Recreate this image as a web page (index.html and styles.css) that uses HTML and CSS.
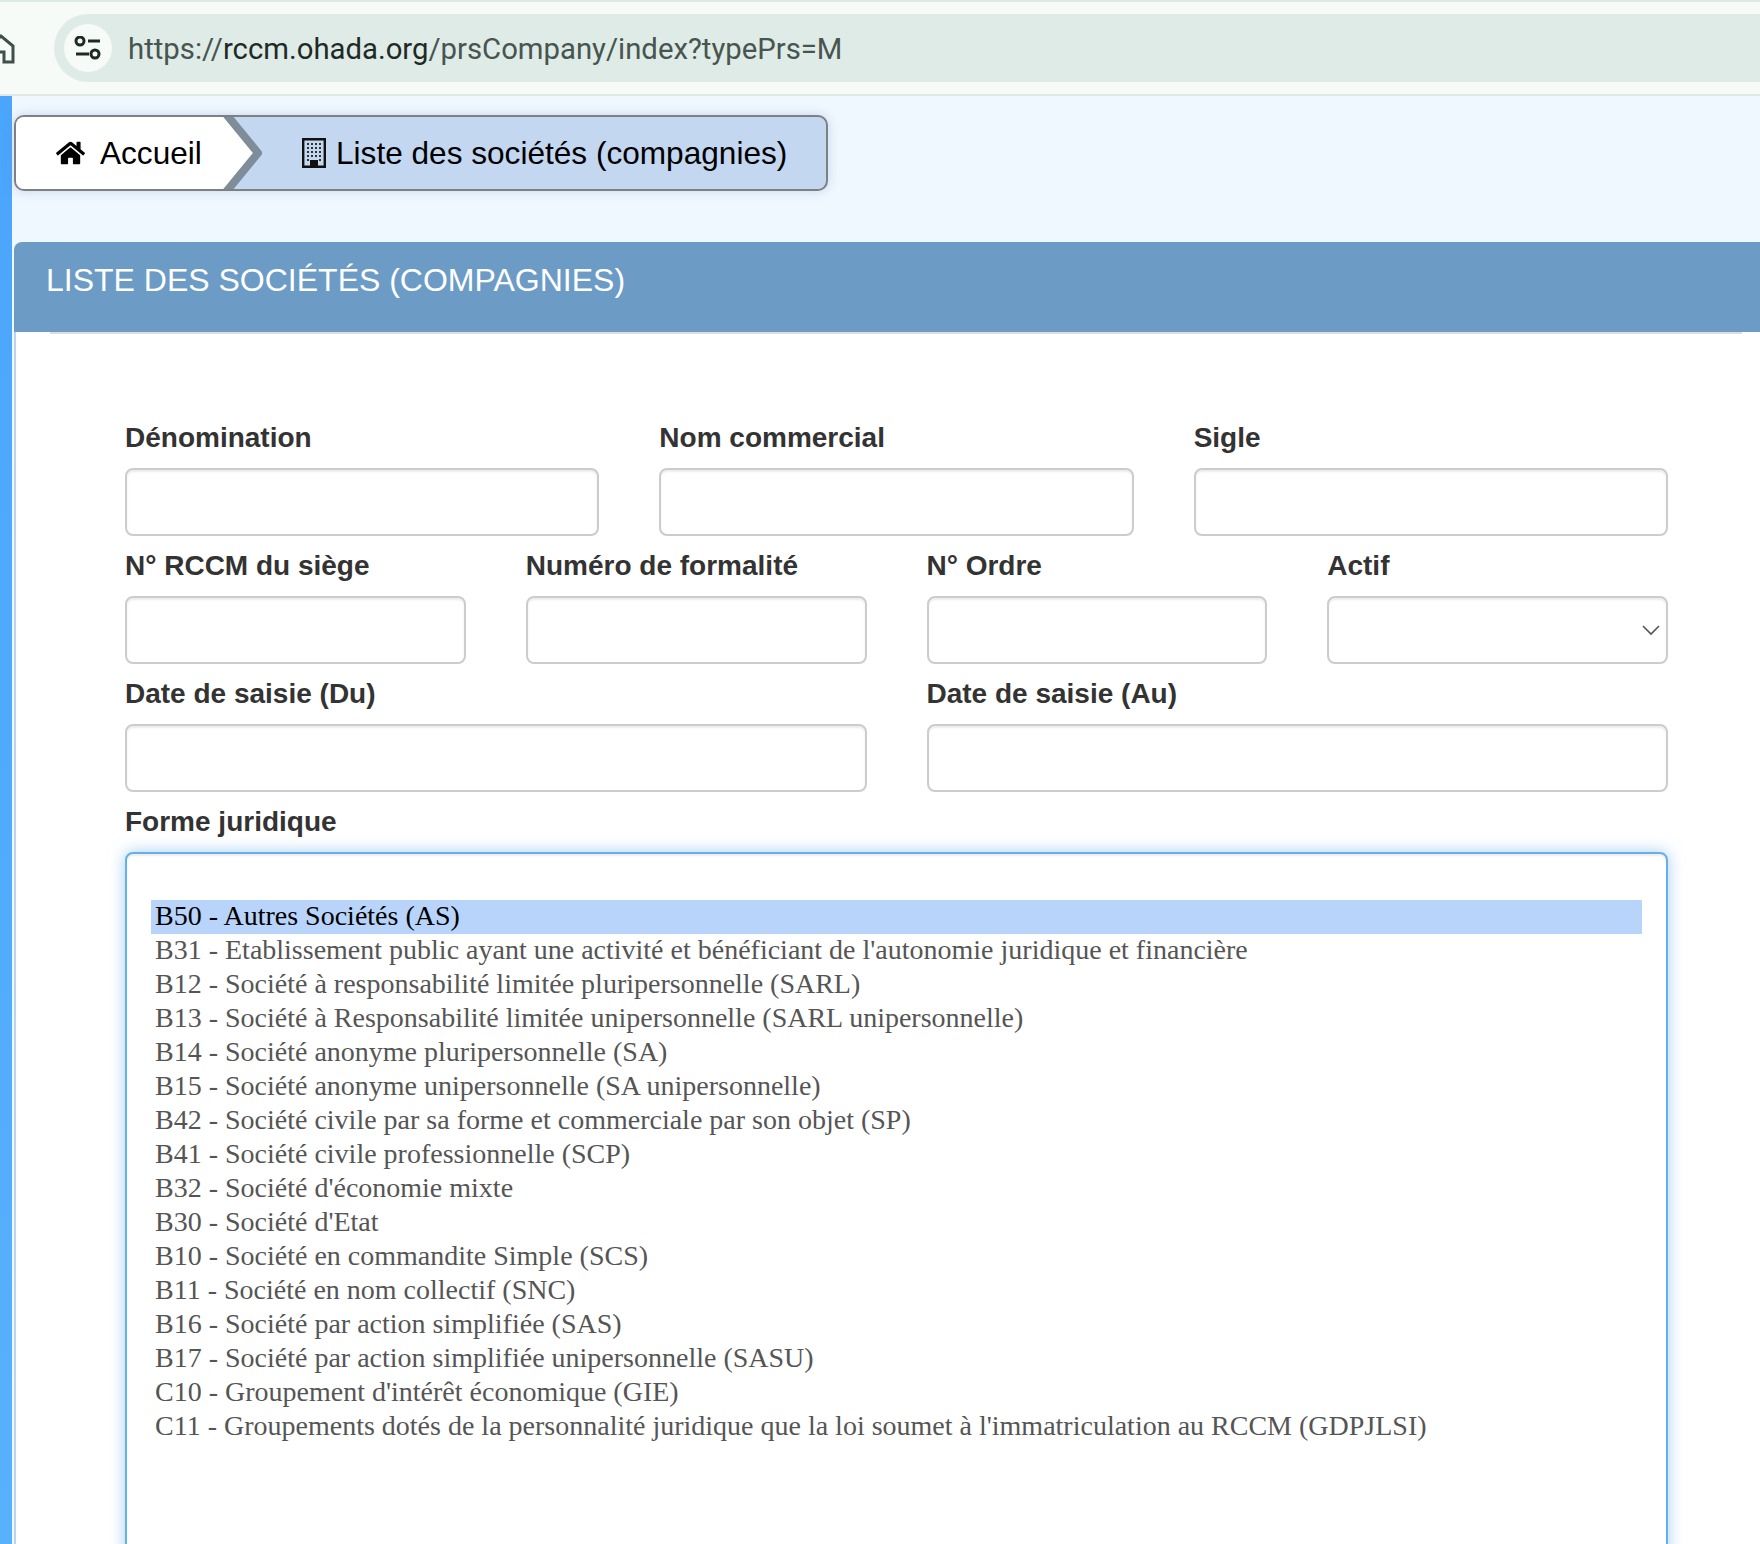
FILE: index.html
```html
<!DOCTYPE html>
<html lang="fr">
<head>
    <meta charset="UTF-8">
    <meta name="viewport" content="width=device-width, initial-scale=1.0">
    <title>Liste des sociétés (compagnies)</title>
    <link rel="stylesheet" href="styles.css">
</head>
<body>
    <header class="toolbar">
        <svg class="chrome-home" width="16" height="32" viewBox="0 0 16 32">
            <path d="M-10 14 L1 3 L13 13 V29 H4 V19 H-4" fill="none" stroke="#3f4f4a" stroke-width="3"/>
        </svg>
        <div class="omnibox">
            <span class="site-icon">
                <svg width="28" height="24" viewBox="0 0 28 24">
                    <circle cx="6" cy="5" r="4" fill="none" stroke="#1f2a26" stroke-width="3"/>
                    <path d="M14 5h12M2 18h13" stroke="#1f2a26" stroke-width="3" fill="none"/>
                    <circle cx="21" cy="18" r="4" fill="none" stroke="#1f2a26" stroke-width="3"/>
                </svg>
            </span>
            <span class="url"><span class="url-dim">https://</span>rccm.ohada.org<span class="url-dim">/prsCompany/index?typePrs=M</span></span>
        </div>
    </header>

    <div class="page">
        <aside class="side-strip"></aside>
        <main class="content">
            <nav class="breadcrumb">
                <a class="crumb crumb-home" href="#">
                    <svg class="home-icon" width="29" height="26" viewBox="0 0 576 512">
                        <path fill="#000" d="M280.37 148.26L96 300.11V464a16 16 0 0 0 16 16l112.06-.29a16 16 0 0 0 15.92-16V368a16 16 0 0 1 16-16h64a16 16 0 0 1 16 16v95.64a16 16 0 0 0 16 16.05L464 480a16 16 0 0 0 16-16V300L295.67 148.26a12.19 12.19 0 0 0-15.3 0zM571.6 251.47L488 182.56V44.05a12 12 0 0 0-12-12h-56a12 12 0 0 0-12 12v72.61L318.47 43a48 48 0 0 0-61 0L4.34 251.47a12 12 0 0 0-1.6 16.9l25.5 31A12 12 0 0 0 45.15 301l235.22-193.74a12.19 12.19 0 0 1 15.3 0L530.9 301a12 12 0 0 0 16.9-1.6l25.5-31a12 12 0 0 0-1.7-16.93z"/>
                    </svg>
                    Accueil
                    <svg class="crumb-arrow" width="50" height="72" viewBox="0 0 50 72">
                        <path d="M0 -4 H10 L42 36 L10 76 H0 Z" fill="#fff"/>
                        <path d="M10 -3 L42 36 L10 75" fill="none" stroke="#7f8d9b" stroke-width="8" stroke-linejoin="round"/>
                    </svg>
                </a>
                <span class="crumb crumb-current">
                    <svg class="building-icon" width="24" height="30" viewBox="0 0 24 30">
                        <path d="M1.2 1.2h21.6v27.6H1.2z" fill="none" stroke="#111" stroke-width="2.4"/>
                        <path fill="#333" d="M5 5h2v2H5zM9 5h2v2H9zM13 5h2v2h-2zM17 5h2v2h-2zM5 9h2v2H5zM9 9h2v2H9zM13 9h2v2h-2zM17 9h2v2h-2zM5 13h2v2H5zM9 13h2v2H9zM13 13h2v2h-2zM17 13h2v2h-2zM5 17h2v2H5zM9 17h2v2H9zM13 17h2v2h-2zM17 17h2v2h-2zM5 21h2v2H5zM17 21h2v2h-2z"/>
                        <path fill="#111" d="M8 22h8v7H8z"/>
                    </svg>
                    Liste des sociétés (compagnies)
                </span>
            </nav>

            <section class="panel">
                <h1 class="panel-title">LISTE DES SOCIÉTÉS (COMPAGNIES)</h1>
                <form class="search-form">
                    <div class="form-row cols-3">
                        <div class="field"><label>Dénomination</label><input type="text" class="form-control"></div>
                        <div class="field"><label>Nom commercial</label><input type="text" class="form-control"></div>
                        <div class="field"><label>Sigle</label><input type="text" class="form-control"></div>
                    </div>
                    <div class="form-row cols-4">
                        <div class="field"><label>N° RCCM du siège</label><input type="text" class="form-control"></div>
                        <div class="field"><label>Numéro de formalité</label><input type="text" class="form-control"></div>
                        <div class="field"><label>N° Ordre</label><input type="text" class="form-control"></div>
                        <div class="field">
                            <label>Actif</label>
                            <div class="select-wrap">
                                <select class="form-control"><option></option></select>
                                <svg class="select-arrow" width="18" height="11" viewBox="0 0 18 11">
                                    <path d="M1 1l8 8 8-8" fill="none" stroke="#555" stroke-width="1.6"/>
                                </svg>
                            </div>
                        </div>
                    </div>
                    <div class="form-row cols-2">
                        <div class="field"><label>Date de saisie (Du)</label><input type="text" class="form-control"></div>
                        <div class="field"><label>Date de saisie (Au)</label><input type="text" class="form-control"></div>
                    </div>
                    <div class="field">
                        <label>Forme juridique</label>
                        <div class="listbox" role="listbox">
                            <div class="option"></div>
                            <div class="option selected">B50 - Autres Sociétés (AS)</div>
                            <div class="option">B31 - Etablissement public ayant une activité et bénéficiant de l'autonomie juridique et financière</div>
                            <div class="option">B12 - Société à responsabilité limitée pluripersonnelle (SARL)</div>
                            <div class="option">B13 - Société à Responsabilité limitée unipersonnelle (SARL unipersonnelle)</div>
                            <div class="option">B14 - Société anonyme pluripersonnelle (SA)</div>
                            <div class="option">B15 - Société anonyme unipersonnelle (SA unipersonnelle)</div>
                            <div class="option">B42 - Société civile par sa forme et commerciale par son objet (SP)</div>
                            <div class="option">B41 - Société civile professionnelle (SCP)</div>
                            <div class="option">B32 - Société d'économie mixte</div>
                            <div class="option">B30 - Société d'Etat</div>
                            <div class="option">B10 - Société en commandite Simple (SCS)</div>
                            <div class="option">B11 - Société en nom collectif (SNC)</div>
                            <div class="option">B16 - Société par action simplifiée (SAS)</div>
                            <div class="option">B17 - Société par action simplifiée unipersonnelle (SASU)</div>
                            <div class="option">C10 - Groupement d'intérêt économique (GIE)</div>
                            <div class="option">C11 - Groupements dotés de la personnalité juridique que la loi soumet à l'immatriculation au RCCM (GDPJLSI)</div>
                        </div>
                    </div>
                </form>
            </section>
        </main>
    </div>
</body>
</html>
```

FILE: styles.css
```css
html, body {
    margin: 0;
    height: 1544px;
    overflow: hidden;
}
body {
    font-family: "Liberation Sans", Arial, sans-serif;
    background-color: #f0f8ff;
    color: #333;
}

/* browser toolbar */
.toolbar {
    box-sizing: border-box;
    height: 96px;
    background-color: #f6fbf8;
    border-top: 2px solid #dcebe4;
    border-bottom: 2px solid #dfe8e5;
    padding-top: 12px;
    padding-left: 54px;
    position: relative;
}
.chrome-home {
    position: absolute;
    left: 0;
    top: 31px;
}
.omnibox {
    height: 68px;
    display: flex;
    align-items: center;
    background-color: #deebe6;
    border-radius: 34px 0 0 34px;
    padding-left: 10px;
}
.site-icon {
    width: 48px;
    height: 48px;
    border-radius: 50%;
    background-color: #f6fbf8;
    display: flex;
    align-items: center;
    justify-content: center;
    margin-right: 16px;
}
.url {
    font-family: Roboto, "Liberation Sans", sans-serif;
    font-size: 29.3px;
    padding-top: 2px;
    color: #1f2a26;
}
.url-dim {
    color: #47544f;
}

/* page */
.page {
    display: flex;
    height: 1448px;
}
.side-strip {
    width: 12px;
    flex: none;
    background: linear-gradient(#4ba5fb, #57b1fd);
}
.content {
    flex: 1;
    min-width: 0;
    padding: 19px 0 0 2px;
}

/* breadcrumb */
.breadcrumb {
    display: inline-flex;
    height: 76px;
    box-sizing: border-box;
    border: 2px solid #808080;
    border-radius: 10px;
    background-color: #c3d7f0;
    box-shadow: 0 0 12px rgba(90, 140, 200, 0.3);
    font-size: 31.6px;
    color: #000;
}
.crumb {
    display: flex;
    align-items: center;
    color: #000;
    text-decoration: none;
}
.crumb-home {
    position: relative;
    width: 208px;
    box-sizing: border-box;
    padding-left: 40px;
    background-color: #fff;
    border-radius: 8px 0 0 8px;
}
.home-icon {
    margin-right: 15px;
}
.crumb-arrow {
    position: absolute;
    left: 200px;
    top: 0;
}
.crumb-current {
    padding: 0 39px 0 78px;
}
.building-icon {
    margin-right: 10px;
}

/* panel */
.panel {
    margin-top: 51px;
    background-color: #fff;
    height: 1302px;
    overflow: hidden;
    border-radius: 8px 0 0 0;
}
.panel-title {
    height: 90px;
    margin: 0;
    padding: 0 0 0 32px;
    background-color: #6c9bc6;
    color: #fff;
    font-size: 32px;
    font-weight: normal;
    line-height: 77px;
    box-sizing: border-box;
    position: relative;
}
.panel-title::after {
    content: "";
    position: absolute;
    left: 36px;
    right: 18px;
    bottom: -2px;
    height: 2px;
    background-color: #ddd;
}
.search-form {
    border-left: 2px solid #bcd5ee;
    padding: 86px 92px 0 109px;
}

.form-row {
    display: grid;
    column-gap: 60px;
}
.cols-2 { grid-template-columns: repeat(2, 1fr); }
.cols-3 { grid-template-columns: repeat(3, 1fr); }
.cols-4 { grid-template-columns: repeat(4, 1fr); }

.field label {
    display: block;
    font-size: 28px;
    font-weight: bold;
    line-height: 40px;
    margin-bottom: 10px;
    color: #333;
}
.form-control {
    display: block;
    width: 100%;
    height: 68px;
    margin-bottom: 10px;
    box-sizing: border-box;
    border: 2px solid #ccc;
    border-radius: 8px;
    background-color: #fff;
    box-shadow: inset 0 2px 2px rgba(0, 0, 0, 0.075);
    font-size: 28px;
    appearance: none;
}
.select-wrap {
    position: relative;
}
.select-arrow {
    position: absolute;
    right: 8px;
    top: 29px;
}

/* forme juridique list */
.listbox {
    height: 900px;
    box-sizing: border-box;
    padding: 12px 24px;
    border: 2px solid #66afe9;
    border-radius: 8px;
    background-color: #fff;
    box-shadow: inset 0 2px 2px rgba(0, 0, 0, 0.075), 0 0 16px rgba(102, 175, 233, 0.6);
    font-family: "Liberation Serif", "Times New Roman", serif;
    font-size: 28px;
    color: #555;
}
.option {
    height: 34px;
    line-height: 32px;
    padding-left: 4px;
    white-space: nowrap;
}
.option.selected {
    background-color: #b8d4fb;
    color: #000;
}
```
